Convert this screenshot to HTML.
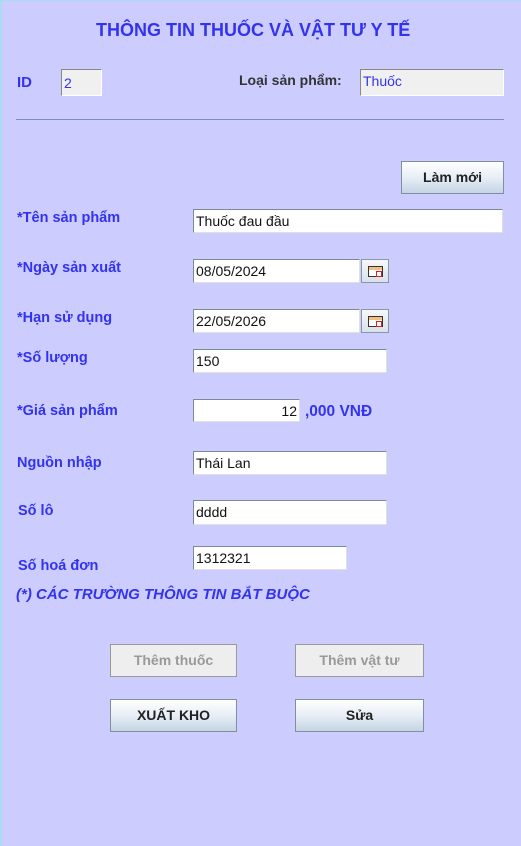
<!DOCTYPE html>
<html><head><meta charset="utf-8"><style>
*{margin:0;padding:0;box-sizing:border-box}
body{width:521px;height:846px;background:#ccccff;position:relative;overflow:hidden;font-family:"Liberation Sans",Arial,sans-serif}
.edge{position:absolute;left:0;top:0;width:521px;height:846px;border-top:1px solid #a8dcf0;border-left:2px solid #a8dcf0}
.a{position:absolute;white-space:nowrap}
.lb{color:#3333ee;font-weight:bold;font-size:14.5px}
.in{position:absolute;background:#fff;border:1px solid #7a8a9a;border-right-color:#e0e0e0;border-bottom-color:#e0e0e0;font-size:14px;color:#111;padding:3px 0 0 2px;line-height:16px}
.ro{background:#f0f0f0;color:#3333ee;border-color:#888 #fff #fff #888}
.btn{position:absolute;border:1px solid #8090a0;background:linear-gradient(#ffffff,#e8eef6 50%,#c4d4e4);font-weight:bold;font-size:14px;color:#222;text-align:center}
.dis{background:#eeeeee;color:#999;border-color:#999}
.cal{position:absolute;width:28px;height:24px;border:1px solid #8898a8;background:linear-gradient(#f8f8fa,#d8e0ea)}
.cal i{position:absolute;left:6px;top:6px;width:15px;height:11px;border:1px solid #333;background:#fff}
.cal i:before{content:"";position:absolute;left:0;top:0;width:13px;height:3px;background:#f0c080}
.cal i:after{content:"";position:absolute;left:7px;top:4px;width:4px;height:4px;border:1px solid #e02020}
</style></head><body>
<div class="edge"></div>
<div class="a" style="left:96px;top:20px;font-size:18px;font-weight:bold;color:#3333ee">THÔNG TIN THUỐC VÀ VẬT TƯ Y TẾ</div>
<div class="a lb" style="left:17px;top:74px;font-size:15px">ID</div>
<div class="in ro" style="left:61px;top:69px;width:41px;height:27px;padding-top:5px">2</div>
<div class="a" style="left:239px;top:72px;font-size:14px;font-weight:bold;color:#333">Loại sản phẩm:</div>
<div class="in ro" style="left:360px;top:69px;width:144px;height:27px;padding-top:3px">Thuốc</div>
<div class="a" style="left:16px;top:119px;width:488px;height:1px;background:#7a90b0"></div>
<div class="btn" style="left:401px;top:161px;width:103px;height:33px;line-height:31px">Làm mới</div>

<div class="a lb" style="left:17px;top:210px">*Tên sản phẩm</div>
<div class="in" style="left:193px;top:209px;width:310px;height:24px">Thuốc đau đầu</div>
<div class="a lb" style="left:17px;top:260px">*Ngày sản xuất</div>
<div class="in" style="left:193px;top:259px;width:167px;height:24px">08/05/2024</div>
<div class="cal" style="left:361px;top:259px"><i></i></div>
<div class="a lb" style="left:17px;top:310px">*Hạn sử dụng</div>
<div class="in" style="left:193px;top:309px;width:167px;height:24px">22/05/2026</div>
<div class="cal" style="left:361px;top:309px"><i></i></div>
<div class="a lb" style="left:17px;top:350px">*Số lượng</div>
<div class="in" style="left:193px;top:349px;width:194px;height:24px">150</div>
<div class="a lb" style="left:17px;top:403px">*Giá sản phẩm</div>
<div class="in" style="left:193px;top:399px;width:107px;height:23px;text-align:right;padding-right:2px">12</div>
<div class="a lb" style="left:305px;top:403px;font-size:15.5px">,000 VNĐ</div>
<div class="a lb" style="left:17px;top:455px">Nguồn nhập</div>
<div class="in" style="left:193px;top:451px;width:194px;height:24px">Thái Lan</div>
<div class="a lb" style="left:18px;top:503px">Số lô</div>
<div class="in" style="left:193px;top:500px;width:194px;height:25px">dddd</div>
<div class="a lb" style="left:18px;top:558px">Số hoá đơn</div>
<div class="in" style="left:193px;top:546px;width:154px;height:24px">1312321</div>
<div class="a lb" style="left:16px;top:586px;font-style:italic;font-size:15px">(*) CÁC TRƯỜNG THÔNG TIN BẮT BUỘC</div>

<div class="btn dis" style="left:110px;top:644px;width:127px;height:33px;line-height:31px">Thêm thuốc</div>
<div class="btn dis" style="left:295px;top:644px;width:129px;height:33px;line-height:31px">Thêm vật tư</div>
<div class="btn" style="left:110px;top:699px;width:127px;height:33px;line-height:31px">XUẤT KHO</div>
<div class="btn" style="left:295px;top:699px;width:129px;height:33px;line-height:31px">Sửa</div>
</body></html>
